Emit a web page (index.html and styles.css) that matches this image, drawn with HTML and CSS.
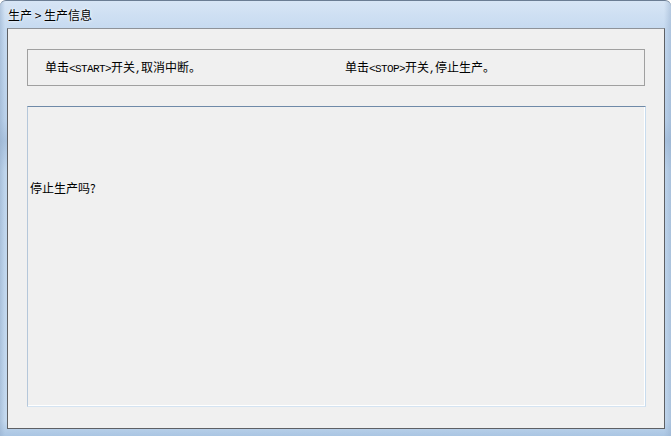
FILE: index.html
```html
<!DOCTYPE html>
<html lang="zh-CN">
<head>
<meta charset="utf-8">
<title>生产信息</title>
<link rel="stylesheet" href="styles.css">
</head>
<body>
<div class="window">
  <div class="titlebar"><span class="title">生产 &gt; 生产信息</span></div>
  <div class="client">
    <div class="hint-box">
      <span class="hint hint-start">单击<span class="lat">&lt;START&gt;</span>开关<span class="lat">,</span>取消中断。</span>
      <span class="hint">单击<span class="lat">&lt;STOP&gt;</span>开关<span class="lat">,</span>停止生产。</span>
    </div>
    <div class="panel">
      <div class="question">停止生产吗?</div>
    </div>
  </div>
</div>
</body>
</html>
```
FILE: styles.css
```css
html, body {
  margin: 0;
  padding: 0;
}
body {
  width: 671px;
  height: 436px;
  overflow: hidden;
  font-family: "Noto Sans CJK SC", "Noto Sans", sans-serif;
  font-size: 12px;
  color: #000;
}
.window {
  width: 671px;
  height: 436px;
  box-sizing: border-box;
  display: flex;
  flex-direction: column;
  padding: 0 6px 7px 7px;
  background:
    linear-gradient(to right, rgba(150,175,205,0.55) 0, rgba(190,212,236,0) 5px, rgba(190,212,236,0) 664px, rgba(150,175,205,0.5) 671px),
    linear-gradient(to bottom, #d7e5f5 0, #c6daf0 28px, #b9d0e9 120px, #a9c2de 140px, #bfd5ec 170px, #c3d8ee 420px, #a8c4e2 436px);
  border-top: 1px solid #6b7d93;
  border-radius: 6px 6px 0 0;
}
.titlebar {
  height: 27px;
  display: flex;
  align-items: flex-start;
}
.title {
  margin: 6px 0 0 1px;
  line-height: 16px;
  font-size: 12px;
  color: #000;
  text-shadow: 0 0 4px rgba(255,255,255,0.9), 0 0 2px rgba(255,255,255,0.9);
}
.client {
  flex: 1;
  display: flex;
  flex-direction: column;
  gap: 20px;
  background: #f0f0f0;
  border: 1px solid #5e6064;
  border-top-color: #8e9298;
  padding: 20px 18px 21px 19px;
}
.hint-box {
  height: 37px;
  box-sizing: border-box;
  margin-right: 1px;
  border: 1px solid #a0a0a0;
  display: flex;
  align-items: center;
  padding-left: 17px;
  line-height: 14px;
}
.hint {
  white-space: nowrap;
}
.hint-start {
  width: 300px;
}
.lat {
  font-family: "Liberation Mono", "DejaVu Sans Mono", monospace;
  font-size: 11px;
  letter-spacing: -0.6px;
}
.panel {
  flex: 1;
  border-top: 1px solid #6f8aa8;
  border-left: 1px solid #b5c7da;
  border-right: 1px solid #c8dcee;
  border-bottom: 1px solid #d5e4f2;
  box-shadow: inset -1px -1px 0 #ffffff;
  padding: 74px 0 0 2px;
}
.question {
  line-height: 14px;
}
```
